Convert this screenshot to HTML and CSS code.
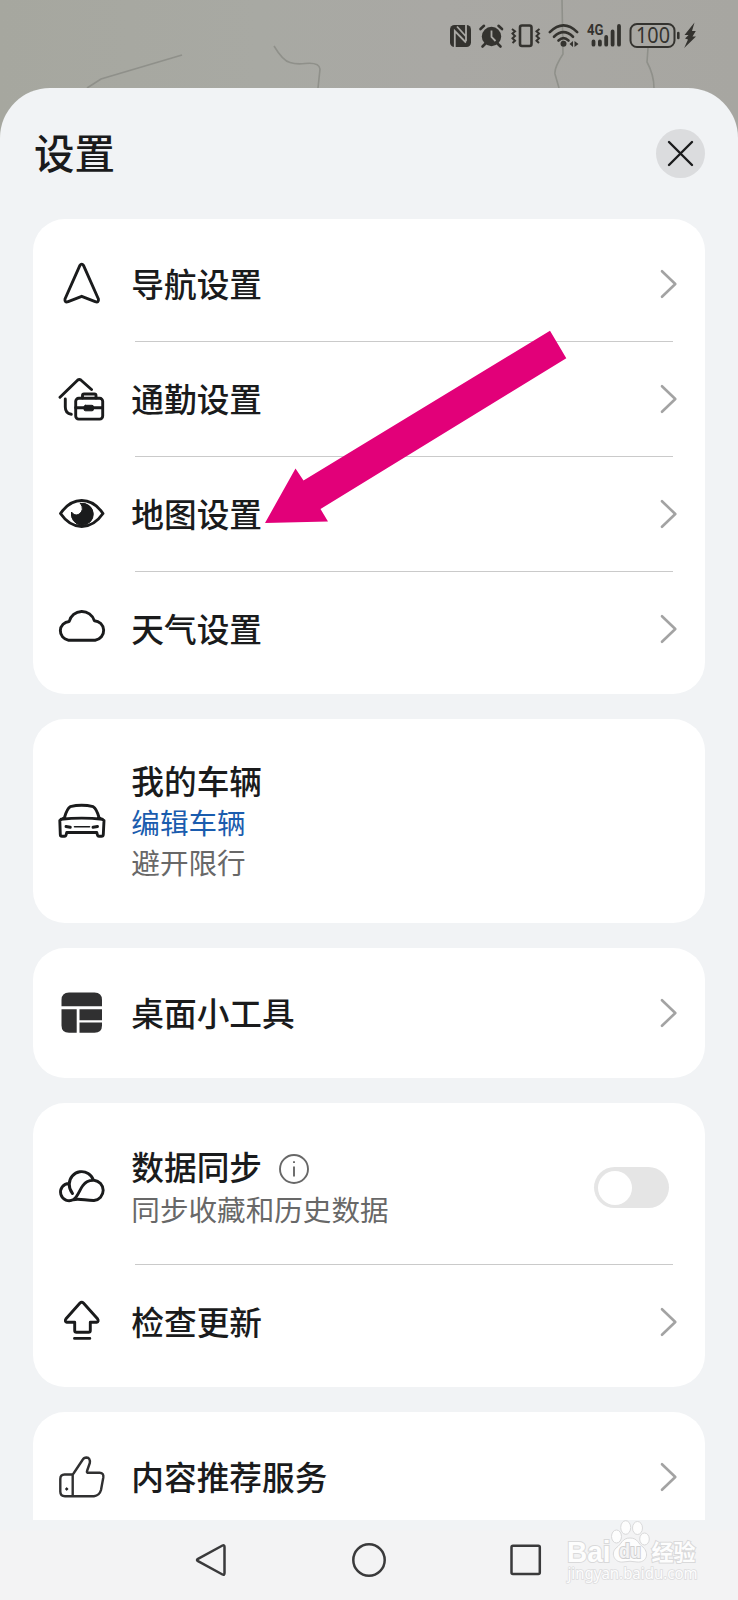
FILE: index.html
```html
<!DOCTYPE html>
<html lang="zh-CN">
<head>
<meta charset="utf-8">
<title>设置</title>
<link rel="stylesheet" href="styles.css">
</head>
<body>
<div class="screen">
  <svg class="map" viewBox="0 0 738 140" aria-hidden="true">
    <g class="road">
      <path d="M87 88 L101 79 L182 55" />
      <path d="M274 46 Q283 61 290 62.500 Q296 64.500 305 63.500 Q319 62 320 69 L318 88" />
      <path d="M562 0 L563 54 Q554 68 555 74 L559 88" />
      <path d="M648 48 L647 62 Q654 75 654 88" />
    </g>
  </svg>

  <header class="status">
    <svg width="26" height="28" viewBox="0 0 26 28"><rect x="2" y="4" width="21" height="22" rx="4.500" fill="currentColor"/><path class="cut" d="M6.800 26V10L18 21.500M9 5.500L18 15.500M18 20V4"/></svg>
    <svg width="28" height="28" viewBox="0 0 28 28"><circle cx="14.500" cy="15.500" r="9.700" fill="currentColor"/><path d="M3.500 8L7 4.800M25 8L21.500 4.800M8.500 22.500L5.500 25.500M20.500 22.500L23.500 25.500" class="st"/><path d="M14.500 9.500V16L18.500 20" class="cut"/></svg>
    <svg class="vibrate" width="34" height="28" viewBox="0 0 34 28"><rect x="11" y="4.500" width="11.500" height="20.500" rx="2" class="st"/><path class="zig" d="M3 8l3 2.300-2.500 2.300L6 15l-2.500 2.300L6 19.700 3.500 22M30.500 8l-3 2.300 2.500 2.300-2.500 2.400 2.500 2.300-2.500 2.400 2.500 2.300"/></svg>
    <svg class="wifi" width="32" height="28" viewBox="0 0 32 28"><path class="st" d="M1.800 11.200Q15.500-2.500 29.200 11.200M6 15.800Q15.500 6.500 25 15.800M10.500 19.500Q15.500 14.800 20.500 19.500"/><circle cx="15.500" cy="22.700" r="3" fill="currentColor"/><path d="M25 20v6l-3.500-3zM26.500 20v6l4-3z" fill="currentColor"/></svg>
    <svg class="signal" width="38" height="28" viewBox="0 0 38 28"><text x="0" y="14.300" class="net" textLength="16.500" lengthAdjust="spacingAndGlyphs">4G</text><path class="bars" d="M6.500 20.500V23.700M12.900 20.500V23.700M19.200 16V23.700M25.600 10.500V23.700M32 5V23.700"/></svg>
    <svg class="battery" width="52" height="28" viewBox="0 0 52 28"><rect x="1.500" y="3" width="44" height="23" rx="6.500" class="batt"/><path d="M49.300 12v5" class="st"/><text x="7" y="22.300" class="pct" textLength="34" lengthAdjust="spacingAndGlyphs">100</text></svg>
    <svg class="bolt" width="14" height="28" viewBox="0 0 14 28"><path d="M11.500 1.500L1.500 14h4L2 17.500l3 1L1.200 27 13 15.500H9.500L12.800 10H9z" fill="currentColor"/></svg>
  </header>

  <main class="sheet">
    <div class="head">
      <h1 class="title">设置</h1>
      <button class="close" aria-label="关闭"><svg width="49" height="49" viewBox="0 0 49 49"><path d="M13 13L36 36M36 13L13 36"/></svg></button>
    </div>

    <section class="card">
      <div class="row">
        <svg class="icon" viewBox="0 0 48 48"><path d="M21.800 5.600Q23.700 2.600 25.600 5.600L40.400 39Q41 43 37.200 41.600L23.700 36.300 10.200 41.600Q6.400 43 7 39Z"/></svg>
        <div class="cell">导航设置</div><svg class="chev" viewBox="0 0 18 30"><path d="M2 2.200L15.300 15 2 27.800"/></svg>
      </div>
      <div class="row">
        <svg class="icon" viewBox="0 0 48 48"><path d="M2 22.300L19.800 5Q21.300 3.800 22.800 5L33.500 14.500M7.300 24V32Q7.300 38.500 13.300 39.300"/><rect x="17.700" y="23.300" width="27" height="20.800" rx="3"/><path d="M17.700 32.700H44.600M24.500 23V20.500Q24.500 19 26 19H36.500Q38 19 38 20.500V23"/><rect class="solid" x="26" y="30.300" width="9.500" height="5.500" rx="1.500"/></svg>
        <div class="cell">通勤设置</div><svg class="chev" viewBox="0 0 18 30"><path d="M2 2.200L15.300 15 2 27.800"/></svg>
      </div>
      <div class="row">
        <svg class="icon" viewBox="0 0 48 48"><path d="M2.500 23.500Q11.500 10.500 23.700 10.500T45 23.500Q36 36.500 23.700 36.500T2.500 23.500Z"/><path class="solid" d="M22.500 13.300A11 11 0 1 1 13.500 22Q16.500 26.500 21 24.200Q27 20 22.500 13.300Z"/></svg>
        <div class="cell">地图设置</div><svg class="chev" viewBox="0 0 18 30"><path d="M2 2.200L15.300 15 2 27.800"/></svg>
      </div>
      <div class="row">
        <svg class="icon" viewBox="0 0 48 48"><path d="M10.500 35.200H37.200A9.800 9.800 0 0 0 36.300 15.700A13 13 0 0 0 11.200 16.500A9.400 9.400 0 0 0 10.500 35.200Z"/></svg>
        <div class="cell">天气设置</div><svg class="chev" viewBox="0 0 18 30"><path d="M2 2.200L15.300 15 2 27.800"/></svg>
      </div>
    </section>

    <section class="card vehicle">
      <div class="row">
        <svg class="icon" viewBox="0 0 48 48"><path d="M6.500 20.500Q9 11.500 12.200 9.700Q23.700 6.800 35.200 9.700Q38.500 11.500 41 20.500M6.500 20.800L1.800 23.500 2.300 37.500Q2.300 39.300 4 39.300H6.500Q7.800 39.300 8.200 37.500L8.700 35.500H38.800L39.300 37.500Q39.700 39.300 41 39.300H43.500Q45.200 39.300 45.300 37.500L46 23.500 41 20.800M3 22.200Q23.700 20 44.500 22.200"/><path d="M8 29.500L12.300 30.200M39.500 29.500L35 30.200"/><path class="thin" d="M16.500 29.700H31.500"/></svg>
        <div class="cell"><div>我的车辆</div><div class="link">编辑车辆</div><div class="sub">避开限行</div></div>
      </div>
    </section>

    <section class="card">
      <div class="row">
        <svg class="icon" viewBox="0 0 48 48"><path class="tile" d="M3.500 17.300V11Q3.500 3.500 11 3.500H36.500Q44 3.500 44 11V17.300ZM3.500 20.200H18.700V43.700H11Q3.500 43.700 3.500 36.500ZM21.500 20.200H44V31.200H21.500ZM21.500 33.500H44V36.500Q44 43.700 36.500 43.700H21.500Z"/></svg>
        <div class="cell">桌面小工具</div><svg class="chev" viewBox="0 0 18 30"><path d="M2 2.200L15.300 15 2 27.800"/></svg>
      </div>
    </section>

    <section class="card">
      <div class="row sync">
        <svg class="icon" viewBox="0 0 48 48"><path d="M14.500 29.500Q11 25 11.300 20A12.400 12.400 0 0 1 35.500 16.200M11 19.500A8.600 8.600 0 1 0 15.500 35.500C20 32.500 21.500 26 24.500 22C27 18 31.500 16 36 16.200A10.200 10.200 0 0 1 36 36.500C28 36.700 21 34 15 35.800"/></svg>
        <div class="cell"><div class="label">数据同步<svg class="info" viewBox="0 0 32 32"><circle cx="16" cy="16" r="14"/><path d="M16 13.500V23.500M16 8.200V10"/></svg></div><div class="sub">同步收藏和历史数据</div></div>
        <span class="toggle"></span>
      </div>
      <div class="row">
        <svg class="icon" viewBox="0 0 48 48"><path d="M22 5Q23.700 3.300 25.400 5L39.500 20.800Q41.200 23.500 38.500 24.300H32.300V32.500Q32.300 34.300 30.500 34.300H18.500Q16.700 34.300 16.700 32.500V24.300H9Q6.300 23.500 8 20.800ZM16.500 40.400H31.800"/></svg>
        <div class="cell">检查更新</div><svg class="chev" viewBox="0 0 18 30"><path d="M2 2.200L15.300 15 2 27.800"/></svg>
      </div>
    </section>

    <section class="card last">
      <div class="row">
        <svg class="icon like" viewBox="0 0 48 48"><path d="M14.700 21.500H6.500Q2.300 21.500 2.300 26V38.500Q2.300 43.200 7 43.200H36Q41.500 42.500 43 37L45.300 24.500Q46 20 41.500 19.700H29.500Q28.500 19.500 29.200 17.500L31.800 10Q32.500 4.800 28.500 4.500Q25.800 4.500 24.500 7L15.500 20.500 14.700 21.500V43"/><ellipse class="solid" cx="8.700" cy="36" rx="1" ry="1.200"/></svg>
        <div class="cell">内容推荐服务</div><svg class="chev" viewBox="0 0 18 30"><path d="M2 2.200L15.300 15 2 27.800"/></svg>
      </div>
    </section>
  </main>

  <nav class="navbar">
    <svg width="36" height="36" viewBox="0 0 36 36"><path d="M28.500 3.500Q30.500 2.500 30.500 5V31Q30.500 33.500 28.500 32.500L4 19.200Q2 18 4 16.800Z"/></svg>
    <svg width="36" height="36" viewBox="0 0 36 36"><circle cx="18" cy="18" r="15.700"/></svg>
    <svg width="36" height="36" viewBox="0 0 36 36"><rect x="3.500" y="3.700" width="28.300" height="28.300" rx="1.500"/></svg>
  </nav>

  <svg class="arrow" width="310" height="200" viewBox="260 327 310 200"><path d="M265 523L295.500 468.500 303.500 480.500 550 330.700 566.300 358.300 320.500 509 328 521.500Z"/></svg>

  <svg class="mark" width="150" height="70" viewBox="558 1515 150 70">
    <text x="567" y="1561.500" class="brand" textLength="43.500" lengthAdjust="spacingAndGlyphs">Bai</text>
    <ellipse cx="616.500" cy="1536.500" rx="5" ry="6.500"/><ellipse cx="625.700" cy="1527.500" rx="5" ry="6.800"/><ellipse cx="637.500" cy="1528" rx="5" ry="6.500"/><ellipse cx="644.500" cy="1539" rx="4.800" ry="6"/>
    <path d="M630 1538C622 1538 622 1544 616 1548C610 1554 615 1563 623 1562Q630 1560.500 637 1562C646 1563 650 1554 643 1547C638 1544 638 1538 630 1538Z"/>
    <text x="619" y="1558" class="du" textLength="22" lengthAdjust="spacingAndGlyphs">du</text>
    <text x="651.500" y="1559.500" class="cn" textLength="44" lengthAdjust="spacingAndGlyphs">经验</text>
    <text x="567.500" y="1578.500" class="url" textLength="130" lengthAdjust="spacingAndGlyphs">jingyan.baidu.com</text>
  </svg>
</div>
</body>
</html>
```
FILE: styles.css
```css
* { box-sizing: border-box; }
body { margin: 0; font-family: "Noto Sans CJK SC", sans-serif; color: #1a1b1c; }
svg { display: block; flex: none; fill: none; }

.screen {
  position: relative;
  width: 738px;
  height: 1600px;
  overflow: hidden;
  display: flex;
  flex-direction: column;
  background: linear-gradient(90deg, #a6a79f, #a8a9a3 35%, #a9a8a4 60%, #a7a6a1);
}
.map { position: absolute; left: 0; top: 0; width: 738px; height: 140px; }
.road { stroke: #8f908a; stroke-width: 1.6; fill: none; }

/* status bar */
.status {
  position: relative;
  height: 87.5px;
  flex: none;
  display: flex;
  padding: 21px 0 0 448px;
  gap: 3px;
  color: #34332f;
}
.status svg { overflow: visible; }
.vibrate { margin-left: 1px; }
.wifi { margin-left: 2px; }
.signal { margin-left: 4px; }
.battery { margin-left: 1px; }
.bolt { margin-left: -1px; }
.status .st { stroke: currentColor; stroke-width: 2.6; stroke-linecap: round; }
.status .zig { stroke: currentColor; stroke-width: 2; }
.status .bars { stroke: currentColor; stroke-width: 3.8; stroke-linecap: round; }
.status .batt { stroke: currentColor; stroke-width: 2; }
.status .cut { stroke: #a9a8a4; stroke-width: 1.8; }
.net { font: 700 15.5px Roboto, sans-serif; fill: currentColor; }
.pct { font: 400 22.5px "Noto Sans", sans-serif; fill: currentColor; }

/* settings sheet */
.sheet {
  position: relative;
  height: 1432px;
  flex: none;
  overflow: hidden;
  padding: 0 33px;
  background: #f1f3f5;
  border-radius: 50px 50px 0 0;
}
.head {
  height: 131.5px;
  display: flex;
  align-items: center;
  justify-content: space-between;
}
.title { margin: 0 0 3px 1px; font-size: 40.5px; line-height: 60px; font-weight: 500; }
.close { width: 49px; height: 49px; padding: 0; border: 0; border-radius: 50%; background: #dbdcde; }
.close path { stroke: #1a1b1c; stroke-width: 2.4; stroke-linecap: round; }

.card {
  margin-bottom: 25px;
  padding: 7.5px 0;
  width: 672px;
  border-radius: 32px;
  background: #fff;
}
.last { margin-bottom: 0; border-radius: 32px 32px 0 0; }
.row {
  position: relative;
  height: 115px;
  display: flex;
  align-items: center;
  padding: 0 27px 0 25px;
}
.row + .row::before {
  content: "";
  position: absolute;
  left: 102px;
  right: 32px;
  top: -0.5px;
  height: 1px;
  background: #cacaca;
}
.icon { width: 48px; height: 48px; stroke: #1a1b1c; stroke-width: 2.9; stroke-linecap: round; stroke-linejoin: round; }
.icon .solid { fill: #1a1b1c; stroke-width: 1; }
.icon .tile { fill: #303031; stroke: none; }
.icon .thin { stroke-width: 1.6; }
.like { stroke: #303031; stroke-width: 2.4; }
.cell { flex: 1; margin-left: 25.3px; padding-bottom: 2.5px; font-size: 32.7px; line-height: 42px; font-weight: 500; }
.link, .sub { font-size: 28.6px; line-height: 40px; font-weight: 400; }
.link { color: #1a5cae; }
.sub { color: #686868; }
.chev { width: 18px; height: 30px; stroke: #a3a3a3; stroke-width: 2.6; stroke-linecap: round; stroke-linejoin: round; }
.vehicle .row { height: 189px; }
.vehicle .cell { padding: 0 0 1px; }
.vehicle .link { padding-top: 1px; line-height: 39px; }
.sync { height: 154px; padding-right: 36px; }
.sync .cell { padding: 0; }
.label { display: flex; align-items: center; gap: 16px; height: 42px; margin-top: -1px; padding-bottom: 1px; }
.sub:last-child { margin-top: 1px; }
.info { width: 32px; height: 32px; margin-top: 5px; stroke: #686868; stroke-width: 1.9; }
.toggle { width: 75px; height: 41px; padding: 3.5px; border-radius: 21px; background: #e5e5e5; }
.toggle::before { content: ""; display: block; width: 34px; height: 34px; border-radius: 50%; background: #fff; }

/* system navigation */
.navbar {
  flex: 1;
  display: flex;
  align-items: center;
  justify-content: center;
  gap: 121px;
  background: linear-gradient(#f1f3f5 10px, #f3f3f4 11px);
}
.navbar path, .navbar circle, .navbar rect { stroke: #3a3a3b; stroke-width: 2.5; stroke-linejoin: round; }

.arrow { position: absolute; left: 260px; top: 327px; fill: #e20079; }

.mark { position: absolute; left: 558px; top: 1515px; fill: #fdfdfd; stroke: #d9d9da; stroke-width: 1; }
.mark text { paint-order: stroke; stroke-width: 2; }
.brand { font: 700 29px "Liberation Sans", sans-serif; }
.mark .du { font: 700 20px "Liberation Sans", sans-serif; fill: #f3f3f4; stroke: #cfcfd0; }
.cn { font: 700 22px "Noto Sans CJK SC", sans-serif; }
.mark .url { font: 400 16px "Noto Sans", sans-serif; stroke: #dcdcdd; stroke-width: 1.6; }
```
